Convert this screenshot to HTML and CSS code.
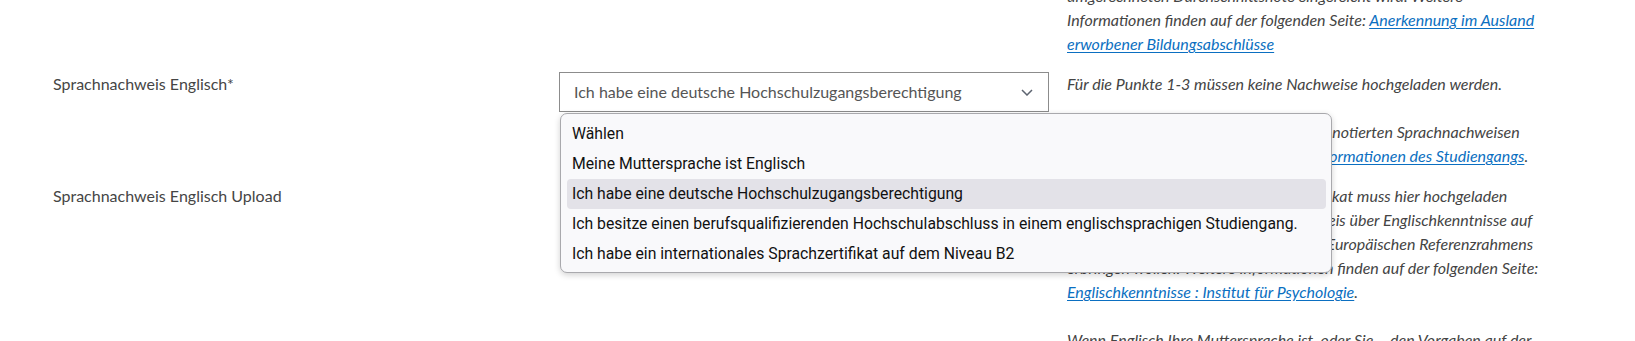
FILE: index.html
```html
<!DOCTYPE html>
<html lang="de">
<head>
  <meta charset="UTF-8" />
  <meta name="viewport" content="width=device-width, initial-scale=1" />
  <title>Bewerbung – Sprachnachweis</title>
  <link rel="stylesheet" href="styles.css">
</head>
<body>

  <div class="form">

    <!-- Durchschnittsnote -->
    <div class="row">
      <label class="label">Durchschnittsnote der HZB*</label>
      <div class="field"></div>
      <div class="help">
        <p>Bitte achten Sie darauf, dass bei ausländischen Abschlüssen eine
          umgerechneten Durchschnittsnote eingereicht wird. Weitere Informationen finden auf der
          folgenden Seite: <a href="#">Anerkennung im Ausland erworbener Bildungsabschlüsse</a></p>
      </div>
    </div>

    <!-- Sprachnachweis -->
    <div class="row">
      <label class="label" for="sprache">Sprachnachweis Englisch*</label>
      <div class="field">
        <div class="select" id="sprache">
          <span class="select-value">Ich habe eine deutsche Hochschulzugangsberechtigung</span>
          <svg class="chevron" viewBox="0 0 12 7" xmlns="http://www.w3.org/2000/svg">
            <polyline points="1,1 6,6 11,1" />
          </svg>
          <ul class="options">
            <li>Wählen</li>
            <li>Meine Muttersprache ist Englisch</li>
            <li class="active">Ich habe eine deutsche Hochschulzugangsberechtigung</li>
            <li>Ich besitze einen berufsqualifizierenden Hochschulabschluss in einem englischsprachigen Studiengang.</li>
            <li>Ich habe ein internationales Sprachzertifikat auf dem Niveau B2</li>
          </ul>
        </div>
      </div>
      <div class="help">
        <p>Für die Punkte 1-3 müssen keine Nachweise hochgeladen werden.</p>
        <p>Weitere Hinweise zu den oben im Menü notierten Sprachnachweisen
          finden Sie im Bereich Studium in den <a href="#">Informationen des Studiengangs</a>.</p>
      </div>
    </div>

    <!-- Upload -->
    <div class="row">
      <label class="label">Sprachnachweis Englisch Upload</label>
      <div class="field"></div>
      <div class="help">
        <p>Das von Ihnen eingereichte Sprachzertifikat muss hier hochgeladen
          werden, wenn Sie alternativ den Nachweis über Englischkenntnisse auf
          dem Niveau B2 des sog. Gemeinsamen Europäischen Referenzrahmens
          erbringen wollen. Weitere Informationen finden auf der folgenden Seite:
          <a href="#">Englischkenntnisse : Institut für Psychologie</a>.</p>
        <p>Wenn Englisch Ihre Muttersprache ist, oder Sie – den Vorgaben auf der
          Seite entsprechend – einen Abschluss in englischer Sprache besitzen, ist kein Upload nötig.</p>
      </div>
    </div>

  </div>

</body>
</html>
```

FILE: styles.css
```css
:root {
  --text: #454545;
  --help: #444;
  --link: #0b6fc1;
  --border: #8c8c8c;
}

body {
  margin: 0;
  font-family: Lato, 'Noto Sans', sans-serif;
  font-size: 16px;
  line-height: 24px;
  color: var(--text);
  background: #fff;
  overflow: hidden;
}

.form {
  display: flex;
  flex-direction: column;
  gap: 16px;
  margin-top: -40px;
  padding-left: 53px;
}

.row {
  display: grid;
  grid-template-columns: 488px 490px 492px;
  column-gap: 18px;
  align-items: start;
}

.label {
  display: block;
}

/* Help texts */
.help {
  font-style: italic;
  color: var(--help);
}

.help p {
  margin: 0;
}

.help p + p {
  margin-top: 24px;
}

.help a {
  color: var(--link);
  text-decoration: underline;
  text-underline-offset: 2px;
}

/* Select */
.select {
  position: relative;
  height: 38px;
  border: 1px solid var(--border);
  display: flex;
  align-items: center;
  padding: 0 14px;
  color: #555;
}

.select-value {
  flex: 1;
}

.chevron {
  width: 12px;
  height: 7px;
  margin-right: 1px;
}

.chevron polyline {
  fill: none;
  stroke: #5d6470;
  stroke-width: 1.5;
}

/* Open dropdown list */
.options {
  position: absolute;
  top: 40px;
  left: 0;
  width: 759px;
  margin: 0;
  padding: 5px 5px 3px 6px;
  list-style: none;
  background: #f9f9fb;
  border: 1px solid #a9a9ad;
  border-radius: 7px;
  box-shadow: 0 2px 6px rgba(0, 0, 0, 0.18);
  font-family: Roboto, 'DejaVu Sans Condensed', sans-serif;
  font-size: 15.75px;
  font-style: normal;
  color: #111;
  z-index: 10;
}

.options li {
  height: 30px;
  line-height: 30px;
  padding-left: 5px;
  border-radius: 4px;
  white-space: nowrap;
}

.options li.active {
  background: #e3e2e8;
}
```
